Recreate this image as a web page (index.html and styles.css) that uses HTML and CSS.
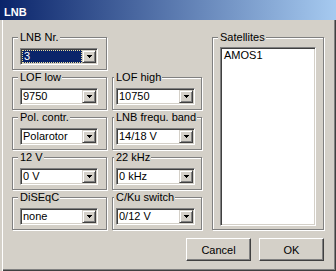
FILE: index.html
```html
<!DOCTYPE html>
<html>
<head>
<meta charset="utf-8">
<title>LNB</title>
<link rel="stylesheet" href="styles.css">
</head>
<body>
<div class="window">
  <div class="titlebar">LNB</div>
  <div class="client">
    <div class="main">
      <div class="grid">
        <div class="group">
          <div class="label">LNB Nr.</div>
          <div class="combo">
            <div class="value focus"><span class="sel">3</span></div>
            <div class="drop"><svg width="5" height="3" viewBox="0 0 5 3" shape-rendering="crispEdges"><path d="M0 0h5v1H0zM1 1h3v1H1zM2 2h1v1H2z" fill="#000"/></svg></div>
          </div>
        </div>
        <div class="empty"></div>

        <div class="group">
          <div class="label">LOF low</div>
          <div class="combo">
            <div class="value">9750</div>
            <div class="drop"><svg width="5" height="3" viewBox="0 0 5 3" shape-rendering="crispEdges"><path d="M0 0h5v1H0zM1 1h3v1H1zM2 2h1v1H2z" fill="#000"/></svg></div>
          </div>
        </div>
        <div class="group right">
          <div class="label">LOF high</div>
          <div class="combo">
            <div class="value">10750</div>
            <div class="drop"><svg width="5" height="3" viewBox="0 0 5 3" shape-rendering="crispEdges"><path d="M0 0h5v1H0zM1 1h3v1H1zM2 2h1v1H2z" fill="#000"/></svg></div>
          </div>
        </div>

        <div class="group">
          <div class="label">Pol. contr.</div>
          <div class="combo">
            <div class="value">Polarotor</div>
            <div class="drop"><svg width="5" height="3" viewBox="0 0 5 3" shape-rendering="crispEdges"><path d="M0 0h5v1H0zM1 1h3v1H1zM2 2h1v1H2z" fill="#000"/></svg></div>
          </div>
        </div>
        <div class="group right">
          <div class="label">LNB frequ. band</div>
          <div class="combo">
            <div class="value">14/18 V</div>
            <div class="drop"><svg width="5" height="3" viewBox="0 0 5 3" shape-rendering="crispEdges"><path d="M0 0h5v1H0zM1 1h3v1H1zM2 2h1v1H2z" fill="#000"/></svg></div>
          </div>
        </div>

        <div class="group">
          <div class="label">12 V</div>
          <div class="combo">
            <div class="value">0 V</div>
            <div class="drop"><svg width="5" height="3" viewBox="0 0 5 3" shape-rendering="crispEdges"><path d="M0 0h5v1H0zM1 1h3v1H1zM2 2h1v1H2z" fill="#000"/></svg></div>
          </div>
        </div>
        <div class="group right">
          <div class="label">22 kHz</div>
          <div class="combo">
            <div class="value">0 kHz</div>
            <div class="drop"><svg width="5" height="3" viewBox="0 0 5 3" shape-rendering="crispEdges"><path d="M0 0h5v1H0zM1 1h3v1H1zM2 2h1v1H2z" fill="#000"/></svg></div>
          </div>
        </div>

        <div class="group">
          <div class="label">DiSEqC</div>
          <div class="combo">
            <div class="value">none</div>
            <div class="drop"><svg width="5" height="3" viewBox="0 0 5 3" shape-rendering="crispEdges"><path d="M0 0h5v1H0zM1 1h3v1H1zM2 2h1v1H2z" fill="#000"/></svg></div>
          </div>
        </div>
        <div class="group right">
          <div class="label">C/Ku switch</div>
          <div class="combo">
            <div class="value">0/12 V</div>
            <div class="drop"><svg width="5" height="3" viewBox="0 0 5 3" shape-rendering="crispEdges"><path d="M0 0h5v1H0zM1 1h3v1H1zM2 2h1v1H2z" fill="#000"/></svg></div>
          </div>
        </div>
      </div>

      <div class="group sat">
        <div class="label">Satellites</div>
        <div class="listbox">
          <div class="item">AMOS1</div>
        </div>
      </div>
    </div>

    <div class="buttons">
      <button class="btn">Cancel</button>
      <button class="btn">OK</button>
    </div>
  </div>
</div>
</body>
</html>
```

FILE: styles.css
```css
* { box-sizing: border-box; }
html, body { margin: 0; padding: 0; }
body {
  font-family: "Liberation Sans", Arial, sans-serif;
  font-size: 11px;
  color: #000;
  background: #d4d0c8;
}
.window {
  width: 336px;
  height: 271px;
  background: #d4d0c8;
  display: flex;
  flex-direction: column;
  box-shadow: inset 2px 0 #d4d0c8, inset 3px 0 #fff, inset -1px -1px #404040, inset -2px -2px #808080;
}
.titlebar {
  flex: none;
  height: 20px;
  padding: 2px 0 0 4px;
  line-height: 20px;
  background: linear-gradient(90deg, #0a246a, #a6caf0);
  color: #fff;
  font-weight: bold;
  font-size: 11px;
}
.client {
  flex: 1;
  display: flex;
  flex-direction: column;
  padding: 11px 12px 0 12px;
}
.main {
  display: flex;
  gap: 10px;
}
.grid {
  display: grid;
  grid-template-columns: 95px 90px;
  grid-auto-rows: 39px;
  column-gap: 5px;
  row-gap: 1px;
}
.group {
  margin-top: 6px;
  height: 33px;
  border: 1px solid #808080;
  box-shadow: 1px 1px 0 #fff, inset 1px 1px 0 #fff;
  padding: 0 8px 0 7px;
}
.group.right {
  padding: 0 6px 0 3px;
}
.label {
  width: max-content;
  height: 13px;
  margin: -7px 0 0 -2px;
  padding: 0 1px 0 2px;
  line-height: 13px;
  background: #d4d0c8;
}
.combo {
  margin-top: 4px;
  height: 17px;
  display: flex;
  background: #fff;
  border: 1px solid;
  border-color: #808080 #fff #fff #808080;
  padding: 1px;
  box-shadow: inset 1px 1px #404040, inset -1px -1px #d4d0c8;
}
.value {
  flex: 1;
  padding-left: 1px;
  line-height: 13px;
  white-space: nowrap;
  overflow: hidden;
}
.value.focus {
  display: flex;
  padding: 0;
}
.sel {
  flex: 1;
  background: #0a246a;
  color: #fff;
  border: 1px dotted #e8dc9c;
  padding-left: 1px;
  line-height: 11px;
}
.drop {
  flex: none;
  width: 14px;
  display: flex;
  align-items: center;
  justify-content: center;
  background: #d4d0c8;
  border: 1px solid;
  border-color: #d4d0c8 #404040 #404040 #d4d0c8;
  box-shadow: inset 1px 1px #fff, inset -1px -1px #808080;
}
.drop svg { display: block; }
.sat {
  width: 112px;
  height: auto;
  display: flex;
  flex-direction: column;
  padding: 0 7px 3px 7px;
}
.listbox {
  margin-top: 3px;
  flex: 1;
  background: #fff;
  border: 1px solid;
  border-color: #808080 #fff #fff #808080;
  padding: 1px 2px;
  box-shadow: inset 1px 1px #404040, inset -1px -1px #d4d0c8;
}
.item {
  line-height: 13px;
  padding-left: 1px;
}
.buttons {
  display: flex;
  justify-content: flex-end;
  gap: 8px;
  margin-top: 8px;
}
.btn {
  width: 65px;
  height: 23px;
  padding: 0;
  font: inherit;
  color: #000;
  background: #d4d0c8;
  border: 1px solid;
  border-color: #fff #404040 #404040 #fff;
  box-shadow: inset -1px -1px #808080;
  border-radius: 0;
}
```
